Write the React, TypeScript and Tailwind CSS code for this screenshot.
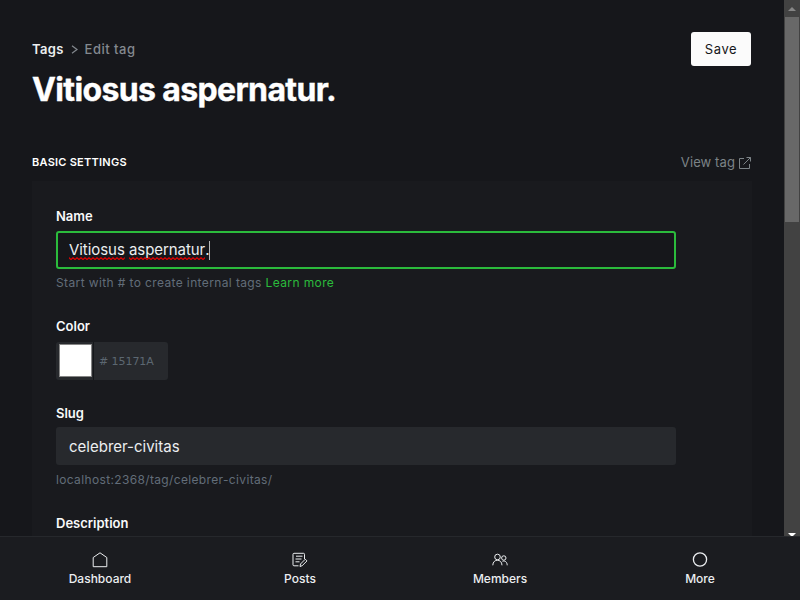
import type { ReactNode } from 'react';

function NavItem({ label, children }: { label: string; children: ReactNode }) {
  return (
    <a className="flex flex-1 flex-col items-center pt-[15px] text-[#eceef0]">
      <svg className="h-4 w-4" viewBox="0 0 16 16" fill="none" stroke="currentColor">
        {children}
      </svg>
      <span className="mt-[2px] text-[12px] font-medium leading-[18px]">{label}</span>
    </a>
  );
}

function Label({ children }: { children: ReactNode }) {
  return <label className="block text-[13px] font-semibold leading-5 text-[#f8f9fa]">{children}</label>;
}

// A word carrying the browser's red spelling squiggle under its baseline.
function Misspelled({ children }: { children: string }) {
  return (
    <span className="relative">
      {children}
      <svg className="absolute bottom-[1px] left-0 h-[3px] w-full" preserveAspectRatio="none">
        <defs>
          <pattern id="squiggle" width="4" height="3" patternUnits="userSpaceOnUse">
            <path d="M-1 1.5Q0-.1 1 1.5T3 1.5T5 1.5" transform="translate(0 .1)" fill="none" stroke="#e80000" strokeWidth="1.2" />
          </pattern>
        </defs>
        <rect width="100%" height="3" fill="url(#squiggle)" />
      </svg>
    </span>
  );
}

function Scrollbar() {
  return (
    <div className="flex h-[536px] w-4 shrink-0 flex-col items-center overflow-hidden bg-[#424242]">
      <svg className="h-[17px] w-4 shrink-0" viewBox="0 0 16 17">
        <path d="M4 11 8 7l4 4z" fill="#868686" />
      </svg>
      <div className="h-[205px] w-[14px] shrink-0 bg-[#686868]" />
      <svg className="mt-[311px] h-[3px] w-4 shrink-0" viewBox="0 0 16 3">
        <path d="M4 0h8L9 3H7z" fill="#fff" />
      </svg>
    </div>
  );
}

export default function App() {
  return (
    <div className="flex h-[600px] w-[800px] flex-col overflow-hidden bg-[#16171b] font-['Inter',sans-serif]">
      <div className="flex h-[536px] shrink-0 overflow-hidden">
        <main className="h-[536px] w-[784px] overflow-hidden px-8">
          <header className="flex h-[152px] items-start justify-between pt-8">
            <div>
              <nav className="mt-[7px] flex h-5 items-center text-[13px] leading-5 tracking-[0.3px]">
                <span className="font-semibold text-[#eceef0]">Tags</span>
                <svg className="ml-[7px] mr-[7px] h-[9px] w-[7px]" viewBox="0 0 7 9" fill="none" stroke="#84898f" strokeWidth="1.2">
                  <path d="m1 .8 5 3.7-5 3.7" />
                </svg>
                <span className="font-medium tracking-[0.5px] text-[#84898f]">Edit tag</span>
              </nav>
              <h1 className="mt-[11px] whitespace-nowrap text-[32px] font-bold leading-10 tracking-[-0.63px] text-white [-webkit-text-stroke:0.4px_white]">
                Vitiosus aspernatur.
              </h1>
            </div>
            <button className="mr-px h-[34px] w-[60px] rounded-[3px] bg-[#fbfbfb] pt-px text-[13px] font-normal tracking-[0.6px] text-[#15171a]">
              Save
            </button>
          </header>

          <section>
            <div className="flex h-[29px] items-start justify-between">
              <h4 className="text-[11px] font-semibold uppercase leading-5 tracking-[0.25px] text-white">Basic settings</h4>
              <a className="mr-px flex items-center gap-1 text-[13px] leading-[21px] tracking-[0.1px] text-[#7c8387]">
                View tag
                <svg className="h-3 w-3" viewBox="0 0 12 12" fill="none" stroke="currentColor">
                  <path d="M5 1.5H.5v10h10V7M7.5.5h4v4M11.5.5l-7 7" />
                </svg>
              </a>
            </div>

            <div className="h-[400px] bg-[#191a1e] px-6 pt-[25px]">
              <Label>Name</Label>
              <div className="mt-[5px] flex h-[38px] w-[620px] items-center rounded-[3px] border-2 border-[#2bbb3c] bg-[#16171b] px-[11px] text-[15px] tracking-[-0.06px] text-[#eceef0]">
                <Misspelled>Vitiosus</Misspelled>
                <span>&nbsp;</span>
                <Misspelled>aspernatur</Misspelled>
                <span>.</span>
                <span className="h-[19px] w-px bg-[#b9babb]" />
              </div>
              <p className="mt-1 text-[12px] leading-5 tracking-[0.38px] text-[#626d79]">
                Start with # to create internal tags <a className="text-[#2bbb3c]">Learn more</a>
              </p>

              <div className="mt-[23px]">
                <Label>Color</Label>
                <div className="mt-[6px] flex h-[38px] w-[112px] overflow-hidden rounded-[3px] bg-[#27292d]">
                  <div className="w-[38px] border-r border-[#15171a] pl-[3px] pt-[2px]">
                    <div className="h-[33px] w-[33px] border border-[#858585] bg-white" />
                  </div>
                  <span className="pl-[5px] pt-px font-['DejaVu_Sans',sans-serif] text-[11px] leading-[38px] tracking-[-0.06px] text-[#5c6771]">
                    # 15171A
                  </span>
                </div>
              </div>

              <div className="mt-[23px]">
                <Label>Slug</Label>
                <div className="mt-[4px] flex h-[38px] w-[620px] items-center rounded-[3px] bg-[#27292d] px-[13px] pt-[2px] text-[15px] text-[#eceef0]">
                  celebrer-civitas
                </div>
                <p className="mt-[5px] text-[12px] leading-5 tracking-[0.35px] text-[#626d79]">
                  localhost:2368/tag/celebrer-civitas/
                </p>
              </div>

              <div className="mt-[23px]">
                <Label>Description</Label>
              </div>
            </div>
          </section>
        </main>
        <Scrollbar />
      </div>

      <nav className="flex h-16 shrink-0 border-t border-[#26282c] bg-[#1b1c20]">
        <NavItem label="Dashboard">
          <path d="M1.2 5.5v9.2h13.6V5.5L8 .8z" />
        </NavItem>
        <NavItem label="Posts">
          <path d="M12.5 7V2.3q0-1-1-1H2q-1 0-1 1v10.5q0 1 1 1h4.5M4 4.2h6.5M3.5 7h6M3.5 9.8h4M8 14.5l.5-2.5 4.8-4.8 1.7 1.7-4.8 4.8z" />
        </NavItem>
        <NavItem label="Members">
          <circle cx="5.5" cy="5" r="2.8" />
          <circle cx="11.8" cy="6" r="2.2" />
          <path d="M.8 13.3c0-6.8 9.2-6.8 9.2 0M10.5 9.3c2.5-1 4.7.8 4.7 4" />
        </NavItem>
        <NavItem label="More">
          <circle cx="8" cy="7.5" r="6.6" strokeWidth="1.3" />
        </NavItem>
      </nav>
    </div>
  );
}
